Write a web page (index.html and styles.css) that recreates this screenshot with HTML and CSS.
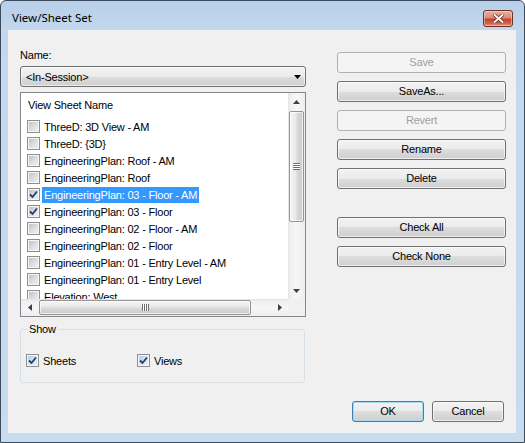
FILE: index.html
```html
<!DOCTYPE html>
<html>
<head>
<meta charset="utf-8">
<title>View/Sheet Set</title>
<link rel="stylesheet" href="styles.css">
</head>
<body>
<div class="window">
  <div class="titlebar">
    <span class="title">View/Sheet Set</span>
    <button class="close" type="button" aria-label="Close">
      <svg width="11" height="9" viewBox="0 0 11 9"><path d="M1.5 1 L9.5 8 M9.5 1 L1.5 8" stroke="#6b2a20" stroke-width="3.4" stroke-linecap="square" fill="none"/><path d="M1.5 1 L9.5 8 M9.5 1 L1.5 8" stroke="#ffffff" stroke-width="1.9" stroke-linecap="square" fill="none"/></svg>
    </button>
  </div>
  <div class="client">
    <div class="main">
      <div class="left">
        <div class="label">Name:</div>
        <div class="combo">
          <span class="combo-text">&lt;In-Session&gt;</span>
          <svg class="combo-arrow" width="7" height="4" viewBox="0 0 7 4"><polygon points="0,0 7,0 3.5,4" fill="#000"/></svg>
        </div>
        <div class="listbox">
          <div class="rows">
            <div class="lhead">View Sheet Name</div>
            <div class="row"><span class="cb"></span><span class="txt">ThreeD: 3D View - AM</span></div>
            <div class="row"><span class="cb"></span><span class="txt">ThreeD: {3D}</span></div>
            <div class="row"><span class="cb"></span><span class="txt">EngineeringPlan: Roof - AM</span></div>
            <div class="row"><span class="cb"></span><span class="txt">EngineeringPlan: Roof</span></div>
            <div class="row"><span class="cb"><svg width="9" height="9" viewBox="0 0 9 9"><path d="M1 4.5 L3.5 7 L8 1.5" stroke="#223c74" stroke-width="1.8" fill="none"/></svg></span><span class="txt sel">EngineeringPlan: 03 - Floor - AM</span></div>
            <div class="row"><span class="cb"><svg width="9" height="9" viewBox="0 0 9 9"><path d="M1 4.5 L3.5 7 L8 1.5" stroke="#223c74" stroke-width="1.8" fill="none"/></svg></span><span class="txt">EngineeringPlan: 03 - Floor</span></div>
            <div class="row"><span class="cb"></span><span class="txt">EngineeringPlan: 02 - Floor - AM</span></div>
            <div class="row"><span class="cb"></span><span class="txt">EngineeringPlan: 02 - Floor</span></div>
            <div class="row"><span class="cb"></span><span class="txt">EngineeringPlan: 01 - Entry Level - AM</span></div>
            <div class="row"><span class="cb"></span><span class="txt">EngineeringPlan: 01 - Entry Level</span></div>
            <div class="row"><span class="cb"></span><span class="txt">Elevation: West</span></div>
          </div>
          <div class="vscroll">
            <div class="sbtn"><svg width="7" height="4" viewBox="0 0 7 4"><polygon points="0,4 7,4 3.5,0" fill="#3f3f3f"/></svg></div>
            <div class="vtrack">
              <div class="vthumb"><svg width="7" height="7" viewBox="0 0 7 7"><path d="M0 0.5H7M0 2.5H7M0 4.5H7M0 6.5H7" stroke="#6e6e6e" stroke-width="1"/><path d="M0 1.5H7M0 3.5H7M0 5.5H7" stroke="#ffffff" stroke-width="1"/></svg></div>
            </div>
            <div class="sbtn"><svg width="7" height="4" viewBox="0 0 7 4"><polygon points="0,0 7,0 3.5,4" fill="#3f3f3f"/></svg></div>
          </div>
          <div class="hscroll">
            <div class="sbtn"><svg width="4" height="7" viewBox="0 0 4 7"><polygon points="4,0 4,7 0,3.5" fill="#3f3f3f"/></svg></div>
            <div class="htrack">
              <div class="hthumb"><svg width="7" height="7" viewBox="0 0 7 7"><path d="M0.5 0V7M2.5 0V7M4.5 0V7M6.5 0V7" stroke="#6e6e6e" stroke-width="1"/><path d="M1.5 0V7M3.5 0V7M5.5 0V7" stroke="#ffffff" stroke-width="1"/></svg></div>
            </div>
            <div class="sbtn"><svg width="4" height="7" viewBox="0 0 4 7"><polygon points="0,0 0,7 4,3.5" fill="#3f3f3f"/></svg></div>
          </div>
          <div class="corner"></div>
        </div>
        <fieldset class="group">
          <legend>Show</legend>
          <div class="grow">
            <label class="opt"><span class="cb blue"><svg width="9" height="9" viewBox="0 0 9 9"><path d="M1 4.5 L3.5 7 L8 1.5" stroke="#223c74" stroke-width="1.8" fill="none"/></svg></span>Sheets</label>
            <label class="opt"><span class="cb blue"><svg width="9" height="9" viewBox="0 0 9 9"><path d="M1 4.5 L3.5 7 L8 1.5" stroke="#223c74" stroke-width="1.8" fill="none"/></svg></span>Views</label>
          </div>
        </fieldset>
      </div>
      <div class="right">
        <button class="btn" type="button" disabled>Save</button>
        <button class="btn" type="button">SaveAs...</button>
        <button class="btn" type="button" disabled>Revert</button>
        <button class="btn" type="button">Rename</button>
        <button class="btn" type="button">Delete</button>
        <button class="btn spaced" type="button">Check All</button>
        <button class="btn" type="button">Check None</button>
      </div>
    </div>
    <div class="footer">
      <button class="btn dlg default" type="button">OK</button>
      <button class="btn dlg" type="button">Cancel</button>
    </div>
  </div>
</div>
</body>
</html>
```
FILE: styles.css
```css
* { box-sizing: border-box; }
html, body { margin: 0; padding: 0; }
body {
  width: 525px;
  height: 443px;
  overflow: hidden;
  background: #ffffff;
  font-family: "Liberation Sans", Arial, sans-serif;
  font-size: 11px;
  letter-spacing: -0.2px;
  color: #000;
}
.window {
  width: 525px;
  height: 443px;
  border: 1px solid #3b4a5c;
  border-radius: 6px 6px 0 0;
  background: linear-gradient(#b8cfe9 0px, #c3d8ee 30px, #c8dcf0 100%);
  display: flex;
  flex-direction: column;
}
.titlebar {
  height: 29px;
  flex: none;
  display: flex;
  align-items: flex-start;
  justify-content: space-between;
}
.title {
  font-family: "Noto Sans", "Open Sans", sans-serif;
  font-size: 11.5px;
  letter-spacing: 0;
  line-height: 16px;
  margin: 9px 0 0 11px;
  color: #000;
}
.close {
  width: 30px;
  height: 17px;
  margin: 9px 11px 0 0;
  padding: 0;
  border: 1px solid #6e3027;
  border-radius: 3px;
  background: linear-gradient(#eab0a2 0%, #db8a76 45%, #c6432a 55%, #d2684f 85%, #e29a86 100%);
  box-shadow: inset 0 0 0 1px rgba(255, 230, 220, 0.45);
  display: flex;
  align-items: center;
  justify-content: center;
}
.client {
  flex: 1;
  margin: 0 8px 9px 7px;
  background: #f0f0f0;
  display: flex;
  flex-direction: column;
  padding: 19px 12px 11px 12px;
}
.main { display: flex; }
.left { width: 286px; flex: none; }
.right {
  width: 169px;
  flex: none;
  margin-left: 31px;
  padding-top: 3px;
  display: flex;
  flex-direction: column;
  gap: 8px;
}
.label { height: 14px; line-height: 13px; }
.combo {
  margin-top: 3px;
  height: 21px;
  border: 1px solid #707070;
  border-radius: 3px;
  background: linear-gradient(#f2f2f2 0%, #ebebeb 50%, #dddddd 50%, #cfcfcf 100%);
  box-shadow: inset 0 0 0 1px rgba(255, 255, 255, 0.6);
  display: flex;
  align-items: center;
  justify-content: space-between;
  padding: 0 4px 0 5px;
}
.combo-text { line-height: 14px; }
.listbox {
  margin-top: 5px;
  height: 225px;
  border: 1px solid #828790;
  background: #fff;
  display: grid;
  grid-template-columns: 1fr 17px;
  grid-template-rows: 1fr 17px;
}
.rows { overflow: hidden; background: #fff; }
.lhead { height: 25px; padding: 5px 0 0 7px; line-height: 14px; }
.row {
  height: 17px;
  display: flex;
  align-items: center;
  padding-left: 6px;
}
.row .cb { margin-right: 2px; }
.txt { padding: 0 2px; line-height: 16px; white-space: nowrap; }
.txt.sel { background: #3399ff; color: #fff; }
.cb {
  width: 13px;
  height: 13px;
  flex: none;
  border: 1px solid #8e8f8f;
  background: linear-gradient(135deg, #b7bbc1 0%, #dcdde0 50%, #f2f2f2 100%);
  box-shadow: inset 0 0 0 1px #f6f6f6;
  display: flex;
  align-items: center;
  justify-content: center;
}
.cb.blue {
  background: linear-gradient(135deg, #aec6e2 0%, #d4e2f1 50%, #eef3f9 100%);
}
.vscroll {
  display: flex;
  flex-direction: column;
  background: linear-gradient(90deg, #e3e3e3 0px, #efefef 2px, #f6f6f6 50%, #eeeeee 100%);
}
.hscroll {
  display: flex;
  background: linear-gradient(#e3e3e3 0px, #efefef 2px, #f6f6f6 50%, #eeeeee 100%);
}
.sbtn {
  flex: none;
  width: 17px;
  height: 17px;
  display: flex;
  align-items: center;
  justify-content: center;
}
.vtrack { flex: 1; padding: 1px 1px 0 1px; }
.vthumb {
  height: 111px;
  border: 1px solid #959595;
  border-radius: 2px;
  background: linear-gradient(90deg, #f5f5f5 0%, #e8e8e8 45%, #d9d9d9 55%, #cbcbcb 100%);
  box-shadow: inset 0 0 0 1px rgba(255, 255, 255, 0.7);
  display: flex;
  align-items: center;
  justify-content: center;
}
.htrack { flex: 1; padding: 1px 0 1px 1px; }
.hthumb {
  width: 212px;
  height: 15px;
  border: 1px solid #959595;
  border-radius: 2px;
  background: linear-gradient(#f5f5f5 0%, #e8e8e8 45%, #d9d9d9 55%, #cbcbcb 100%);
  box-shadow: inset 0 0 0 1px rgba(255, 255, 255, 0.7);
  display: flex;
  align-items: center;
  justify-content: center;
}
.corner { background: #f0f0f0; }
.group {
  margin: 5px 0 0 0;
  padding: 0 5px 15px 5px;
  width: 285px;
  min-width: 0;
  border: 1px solid #d5dfe5;
  border-radius: 3px;
}
.group legend {
  padding: 0 2px;
  margin-left: 1px;
  line-height: 15px;
}
.grow {
  display: flex;
  align-items: center;
  height: 13px;
  margin-top: 17px;
}
.opt {
  width: 111px;
  display: flex;
  align-items: center;
  line-height: 14px;
}
.opt .cb { margin-right: 4px; }
.btn {
  height: 21px;
  padding: 0 0 1px 0;
  font: inherit;
  letter-spacing: inherit;
  color: #000;
  border: 1px solid #707070;
  border-radius: 3px;
  background: linear-gradient(#f2f2f2 0%, #ebebeb 50%, #dddddd 50%, #cfcfcf 100%);
  box-shadow: inset 0 0 0 1px rgba(255, 255, 255, 0.65);
}
.btn:disabled {
  color: #a0a0a0;
  border-color: #adb2b5;
  background: #f4f4f4;
  box-shadow: none;
}
.btn.spaced { margin-top: 20px; }
.footer {
  margin-top: auto;
  display: flex;
  justify-content: flex-end;
  gap: 8px;
}
.btn.dlg { width: 72px; }
.btn.default {
  border-color: #3c7fb1;
  box-shadow: inset 0 0 0 1px #a6d9f4;
}
```
